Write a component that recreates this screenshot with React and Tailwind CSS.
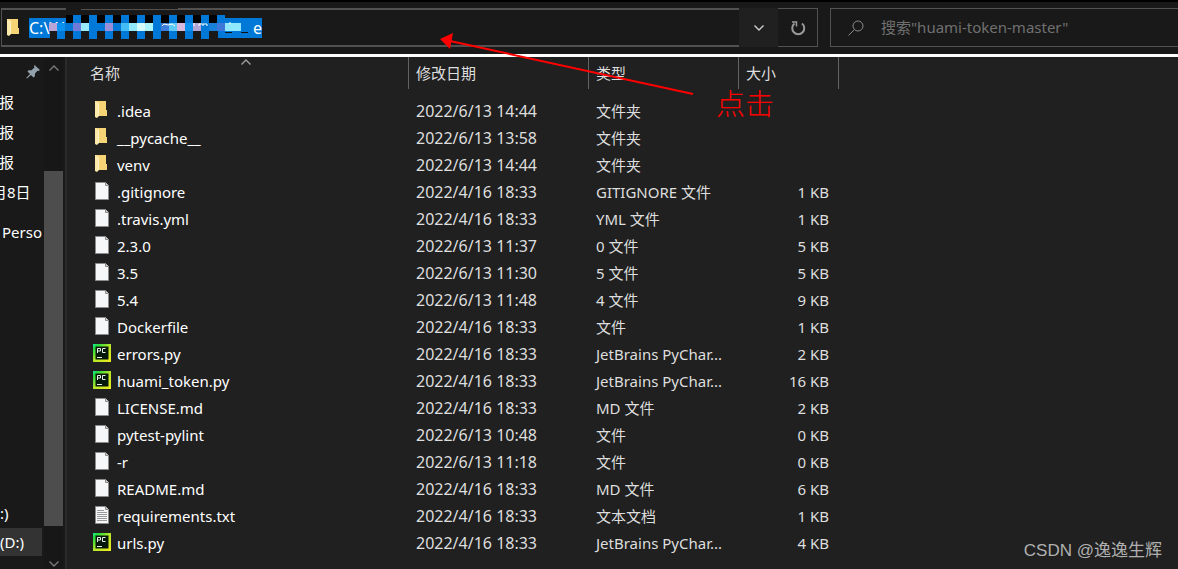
import React from 'react'

const files = [
  { name: '.idea', date: '2022/6/13 14:44', type: '文件夹', size: '', icon: 'folder' },
  { name: '__pycache__', date: '2022/6/13 13:58', type: '文件夹', size: '', icon: 'folder' },
  { name: 'venv', date: '2022/6/13 14:44', type: '文件夹', size: '', icon: 'folder' },
  { name: '.gitignore', date: '2022/4/16 18:33', type: 'GITIGNORE 文件', size: '1 KB', icon: 'file' },
  { name: '.travis.yml', date: '2022/4/16 18:33', type: 'YML 文件', size: '1 KB', icon: 'file' },
  { name: '2.3.0', date: '2022/6/13 11:37', type: '0 文件', size: '5 KB', icon: 'file' },
  { name: '3.5', date: '2022/6/13 11:30', type: '5 文件', size: '5 KB', icon: 'file' },
  { name: '5.4', date: '2022/6/13 11:48', type: '4 文件', size: '9 KB', icon: 'file' },
  { name: 'Dockerfile', date: '2022/4/16 18:33', type: '文件', size: '1 KB', icon: 'file' },
  { name: 'errors.py', date: '2022/4/16 18:33', type: 'JetBrains PyChar...', size: '2 KB', icon: 'pycharm' },
  { name: 'huami_token.py', date: '2022/4/16 18:33', type: 'JetBrains PyChar...', size: '16 KB', icon: 'pycharm' },
  { name: 'LICENSE.md', date: '2022/4/16 18:33', type: 'MD 文件', size: '2 KB', icon: 'file' },
  { name: 'pytest-pylint', date: '2022/6/13 10:48', type: '文件', size: '0 KB', icon: 'file' },
  { name: '-r', date: '2022/6/13 11:18', type: '文件', size: '0 KB', icon: 'file' },
  { name: 'README.md', date: '2022/4/16 18:33', type: 'MD 文件', size: '6 KB', icon: 'file' },
  { name: 'requirements.txt', date: '2022/4/16 18:33', type: '文本文档', size: '1 KB', icon: 'text' },
  { name: 'urls.py', date: '2022/4/16 18:33', type: 'JetBrains PyChar...', size: '4 KB', icon: 'pycharm' },
]

function FolderIcon() {
  return (
    <svg viewBox="0 0 18 18" className="w-[18px] h-[18px] shrink-0">
      <path d="M2 0h11v9h1v6H2z" fill="#f5d476" />
      <path d="M2 0h1l3 2v13l-2 2-2-1z" fill="#ffe9a8" />
      <path d="M5.500 2v13" stroke="#fff3cc" />
    </svg>
  )
}

function FileIcon({ lines }) {
  return (
    <svg viewBox="0 0 18 18" className="w-[18px] h-[18px] shrink-0">
      <path d="M2.5.5h10l3 3v14h-13z" fill="#f6f7f8" stroke="#8c8c8c" />
      <path d="M12.5.5v3h3" fill="#d8d8d8" stroke="#8c8c8c" />
      {lines && <path d="M4 4.5h7M4 6.5h10M4 8.5h10M4 10.5h10M4 12.5h10M4 14.5h10" stroke="#9a9a9a" />}
    </svg>
  )
}

function PyCharmIcon() {
  return (
    <svg viewBox="0 0 18 18" className="w-[18px] h-[18px] shrink-0">
      <defs>
        <linearGradient id="pc" x1="0" y1="0" x2="1" y2="1">
          <stop offset="0" stopColor="#21e7a9" />
          <stop offset="0.15" stopColor="#1fdc3c" />
          <stop offset="0.5" stopColor="#b4e62a" />
          <stop offset="1" stopColor="#f2ec1c" />
        </linearGradient>
      </defs>
      <rect width="18" height="18" fill="url(#pc)" />
      <rect x="2.500" y="2.500" width="13" height="13" fill="#06180b" />
      <path d="M4.500 9V4.500H7.500v2.500h-3M12.500 4.500H9.500v4h3M4 13.500h5" fill="none" stroke="#e8f2ea" />
    </svg>
  )
}

function RowIcon({ kind }) {
  if (kind === 'folder') return <FolderIcon />
  if (kind === 'pycharm') return <PyCharmIcon />
  return <FileIcon lines={kind === 'text'} />
}

function Chevron({ up, className }) {
  return (
    <svg viewBox="0 0 10 6" fill="none" stroke="currentColor" strokeWidth="1.4" className={className}>
      <path d={up ? 'M.5 5.5L5 1l4.5 4.5' : 'M.5 .5L5 5L9.5 .5'} />
    </svg>
  )
}

// colour blocks hiding the middle of the path
const mosaic = [
  '#b9a4d8', '#0a90ef', '#0078d7', '#6e7bd8', '#96eafb', '#0078d7',
  '#0078d7', '#9a8fd6', '#0078d7', '#42bdf5', '#8fe8fb', '#d5fbfd',
  '#a9f5fb', '#0078d7', '#3d7ddb', '#5ecbf7', '#d8b8dc', '#0a90ef',
  '#b5a6d8', '#0078d7', '#1880d8', '#3d78d8', '#8fe8fb', '#8fe8fb',
]

function AddressBar() {
  return (
    <div className="flex flex-[0_0_818px] h-[39px]">
      <div className="flex-1 flex items-center border-y-2 border-l border-[#515151] ml-px pl-[3px] relative">
        <FolderIcon />
        <input
          aria-label="地址"
          defaultValue="C:\W"
          className="ml-1.5 w-[233px] h-5 bg-[#0078d7] text-white text-base outline-none"
        />
        <svg viewBox="0 0 200 32" className="absolute left-[47px] -top-0.5 w-[200px] h-8">
          <path d="M17 0h112v1H17zM17 1h15v1H17z" fill="#191919" />
          <path d="M17 7h152v8H17z" fill="#000" />
          <path d="M1 23h168v8H1z" fill="#191919" />
          {Array.from({ length: 10 }, (_, i) => (
            <rect key={i} x={8 + i * 16} y={i ? 7 : 15} width="8" height={i ? 24 : 16} fill="#0078d7" />
          ))}
          <rect x="168" y="7" width="8" height="8" fill="#0078d7" />
          {mosaic.map((c, i) => (
            <rect key={i} x={i * 8} y="15" width="8" height="8" fill={c} />
          ))}
          <path d="M145 15v3M150 18v-2h4v2M154 16h4v2M181 14v2M113 18l2-2 4 1 4-1 3 2" fill="none" stroke="#fff" />
          <path d="M176 24.500h7M192 24.500h7" stroke="#111" />
        </svg>
        <span className="absolute left-[251px] text-base leading-5 text-white">e</span>
      </div>
      <button aria-label="历史" className="w-[39px] bg-[#202020] text-[#cfcfcf] flex items-center justify-center">
        <Chevron className="w-2.5 h-1.5" />
      </button>
      <button aria-label="刷新" className="w-10 border border-l-0 border-[#515151] text-[#9a9a9a] flex items-center justify-center">
        <svg viewBox="0 0 16 16" fill="none" stroke="currentColor" strokeWidth="2" className="w-4 h-4">
          <path d="M12 3.500A6 6 0 1 1 4.500 3.500" />
          <path d="M2 2h4.500v4.500" strokeWidth="1.500" />
        </svg>
      </button>
    </div>
  )
}

function SearchBox() {
  return (
    <label className="flex-1 min-w-0 h-[39px] ml-3 border border-r-0 border-[#515151] flex items-center pl-[17px]">
      <svg viewBox="0 0 16 16" fill="none" stroke="#8a8a8a" className="w-4 h-4 shrink-0">
        <circle cx="10" cy="6" r="5" />
        <path d="M6.500 9.500L.5 15.500" />
      </svg>
      <input
        aria-label="搜索"
        placeholder={'搜索"huami-token-master"'}
        className="ml-[17px] flex-1 min-w-0 bg-transparent text-[15px] placeholder:text-[#707070] outline-none"
      />
    </label>
  )
}

function Sidebar() {
  return (
    <aside className="flex shrink-0 w-[67px] bg-[#191919] border-r-2 border-[#2b2b2b]">
      <nav className="w-11 flex flex-col overflow-hidden whitespace-nowrap text-[15px] leading-[30px] text-white">
        <div className="h-[30px] flex items-center justify-end pr-1">
          <svg viewBox="0 0 14 14" className="w-3.5 h-3.5" fill="#93a1ad">
            <path d="M8.500 0L14 5l-1.500 1-1-.3L9 8.500l-.2 3L7.500 12.500 5 10 1 13.500.2 13 4 9 1.500 6.500 2.500 5.300l3-.1L8.500 2.500 8 1z" />
          </svg>
        </div>
        <a href="#1" className="-ml-px">报</a>
        <a href="#2" className="-ml-px">报</a>
        <a href="#3" className="-ml-px">报</a>
        <a href="#4" className="-ml-2">月8日</a>
        <a href="#5" className="mt-2.5 ml-0.5">Perso</a>
        <a href="#c" className="mt-auto">:)</a>
        <a href="#d" className="w-[42px] h-7 leading-7 bg-[#333333] mb-[13px]">(D:)</a>
      </nav>
      <div className="w-[19px] bg-[#171717] flex flex-col items-center text-[#7a7a7a] pt-2 pb-0.5">
        <Chevron up className="w-2.5 h-1.5" />
        <div className="mt-[100px] mb-[35px] flex-1 w-full bg-[#4d4d4d]" />
        <Chevron className="w-2.5 h-1.5" />
      </div>
    </aside>
  )
}

function FileTable() {
  return (
    <table className="table-fixed w-[772px] text-left text-[#dedede] text-[15px] border-collapse">
      <colgroup>
        <col className="w-[342px]" />
        <col className="w-[180px]" />
        <col className="w-[150px]" />
        <col className="w-[100px]" />
      </colgroup>
      <thead>
        <tr className="h-[41px] align-top leading-8">
          <th className="p-0 font-normal">
            <div className="relative h-8 pl-[23px] border-r border-[#636363]">
              名称
              <Chevron up className="absolute left-[174px] top-0.5 w-2.5 h-1.5 text-[#a0a0a0]" />
            </div>
          </th>
          <th className="p-0 font-normal"><div className="h-8 pl-[7px] border-r border-[#636363]">修改日期</div></th>
          <th className="p-0 font-normal"><div className="h-8 pl-[7px] border-r border-[#636363]">类型</div></th>
          <th className="p-0 font-normal"><div className="h-8 pl-[7px] border-r border-[#636363]">大小</div></th>
        </tr>
      </thead>
      <tbody>
        {files.map((f) => (
          <tr key={f.name} className="h-[27px] leading-[27px] whitespace-nowrap">
            <td className="p-0 pl-[26px]">
              <div className="flex items-center text-white">
                <span className="mb-[3px]"><RowIcon kind={f.icon} /></span>
                <span className="ml-1.5">{f.name}</span>
              </div>
            </td>
            <td className="p-0 pl-[7px] text-base leading-[27px]">{f.date}</td>
            <td className="p-0 pl-[7px]">{f.type}</td>
            <td className="p-0 pr-2.5 text-right">{f.size}</td>
          </tr>
        ))}
      </tbody>
    </table>
  )
}

export default function App() {
  return (
    <div className="relative min-h-screen flex flex-col bg-[#202020] font-['Noto_Sans','Noto_Sans_CJK_SC',sans-serif] overflow-hidden">
      <header className="flex bg-[#191919] border-t-2 border-t-black border-b-3 border-b-white pt-1.5 pb-[7px]">
        <AddressBar />
        <SearchBox />
      </header>
      <div className="flex flex-1">
        <Sidebar />
        <main className="flex-1 min-w-0">
          <FileTable />
        </main>
      </div>

      {/* red arrow and note */}
      <svg viewBox="0 0 260 70" className="absolute left-[438px] top-[30px] w-[260px] h-[70px] pointer-events-none">
        <path d="M12 11L255 64" stroke="#f00" strokeWidth="2" />
        <path d="M2 9L15 3l-3 16z" fill="#f00" />
      </svg>
      <span className="absolute left-[716px] top-[84px] text-[29px] leading-10 font-light text-[#f00]">点击</span>
      <span className="absolute right-4 bottom-1.5 text-[17px] leading-6 text-[#b0b0b0] font-['Liberation_Sans','Noto_Sans_CJK_SC',sans-serif]">CSDN @逸逸生辉</span>
    </div>
  )
}
